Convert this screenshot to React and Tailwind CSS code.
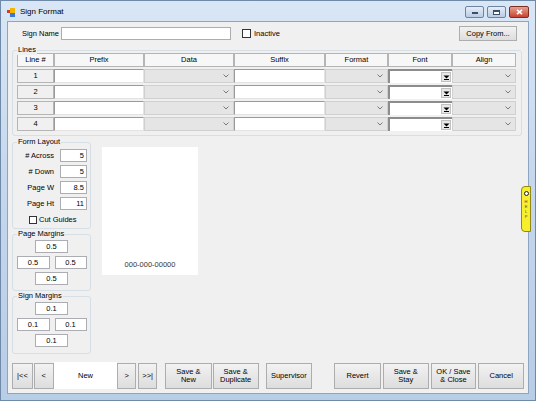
import React from 'react';

const cols = [37, 90, 90, 91, 63, 64, 64];
const heads = ['Line #', 'Prefix', 'Data', 'Suffix', 'Format', 'Font', 'Align'];

const Chevron = () => (
  <svg width="6" height="4" viewBox="0 0 6 4" className="mr-[4px]">
    <path d="M0.5 0.5 L3 3 L5.5 0.5" fill="none" stroke="#6d6d6d" strokeWidth="0.9" />
  </svg>
);

const TextBox = ({ w, value = '', align = 'left', className = '' }) => (
  <div
    className={`h-[13px] bg-white border border-[#abadb3] flex items-center px-[2px] leading-none ${align === 'right' ? 'justify-end' : align === 'center' ? 'justify-center' : ''} ${className}`}
    style={{ width: w }}
  >
    {value}
  </div>
);

const Group = ({ title, className = '', children }) => (
  <div className={`relative border border-[#d5dfe5] rounded-[3px] ${className}`}>
    <span className="absolute top-[-6px] left-[4px] bg-[#f0f0f0] px-[1px] leading-[10px]">{title}</span>
    {children}
  </div>
);

const Btn = ({ w, children, className = '' }) => (
  <div
    className={`h-[26px] bg-gradient-to-b from-[#f2f2f2] to-[#dddddd] border border-[#adadad] flex items-center justify-center text-center leading-[8px] ${className}`}
    style={{ width: w }}
  >
    {children}
  </div>
);

function LineRow({ n }) {
  return (
    <div className="flex h-[14px]">
      <div className="h-full bg-[#f0f0f0] border border-[#b5b5b5] flex items-center justify-center" style={{ width: cols[0] }}>{n}</div>
      <div className="h-full bg-white border-t border-l border-[#9a9a9a] border-b border-r border-b-[#e3e3e3] border-r-[#e3e3e3]" style={{ width: cols[1] }} />
      <div className="h-full bg-[#e5e5e5] border border-[#d0d0d0] flex items-center justify-end" style={{ width: cols[2] }}><Chevron /></div>
      <div className="h-full bg-white border-t border-l border-[#9a9a9a] border-b border-r border-b-[#e3e3e3] border-r-[#e3e3e3]" style={{ width: cols[3] }} />
      <div className="h-full bg-[#e5e5e5] border border-[#d0d0d0] flex items-center justify-end" style={{ width: cols[4] }}><Chevron /></div>
      <div className="h-full bg-white border-t-2 border-l-2 border-[#8c8c8c] flex items-center justify-end pr-[1px]" style={{ width: cols[5] }}>
        <div className="w-[10px] h-[10px] bg-[#e8e8e8] border border-[#c0c0c0] flex items-center justify-center">
          <svg width="7" height="6" viewBox="0 0 7 6">
            <path d="M0.5 1.5 L6.5 1.5 L3.5 4.5 Z" fill="#000" />
            <rect x="1" y="5" width="5" height="1" fill="#000" />
          </svg>
        </div>
      </div>
      <div className="h-full bg-[#e5e5e5] border border-[#d0d0d0] flex items-center justify-end" style={{ width: cols[6] }}><Chevron /></div>
    </div>
  );
}

function LayoutField({ label, value }) {
  return (
    <div className="flex items-center h-[13px]">
      <div className="w-[47px] text-right pr-[6px]">{label}</div>
      <TextBox w={27} value={value} align="right" />
    </div>
  );
}

function Margins({ v }) {
  return (
    <div className="flex flex-col items-center pt-[5px] gap-[3px]">
      <TextBox w={33} value={v} align="center" />
      <div className="flex gap-[5px]">
        <TextBox w={33} value={v} align="center" />
        <TextBox w={32} value={v} align="center" />
      </div>
      <TextBox w={33} value={v} align="center" />
    </div>
  );
}

export default function App() {
  return (
    <div className="w-[536px] h-[401px] bg-gradient-to-b from-[#d9e6f5] via-[#c4d6ec] to-[#b8cde6] border border-[#6f8aa8] flex flex-col font-['Liberation_Sans',Arial,sans-serif] text-[7.5px] text-black overflow-hidden">
      {/* title bar */}
      <div className="h-[20px] flex items-center pl-[6px] pr-[6px] shrink-0">
        <svg width="8" height="9" viewBox="0 0 8 9" className="mr-[5px] mt-[2px]">
          <rect x="0" y="2" width="3" height="3" fill="#d8382a" />
          <rect x="3" y="0" width="5" height="5" fill="#f4b400" />
          <rect x="3" y="5" width="5" height="4" fill="#3b78d8" />
        </svg>
        <span className="text-[8px] mt-[2px]">Sign Format</span>
        <div className="ml-auto flex items-center gap-[3px] mt-[2px]">
          <div className="w-[19px] h-[12px] rounded-[2px] border border-[#6d84a3] bg-gradient-to-b from-[#e6eef8] to-[#b9cbe2] flex items-end justify-center pb-[3px]">
            <div className="w-[6px] h-[2px] bg-white border border-[#3b4f6b]" />
          </div>
          <div className="w-[19px] h-[12px] rounded-[2px] border border-[#6d84a3] bg-gradient-to-b from-[#e6eef8] to-[#b9cbe2] flex items-center justify-center">
            <div className="w-[7px] h-[5px] border border-[#3b4f6b] border-t-2 bg-white" />
          </div>
          <div className="w-[20px] h-[12px] rounded-[2px] border border-[#7a2e25] bg-gradient-to-b from-[#e8a090] to-[#c4432f] flex items-center justify-center">
            <svg width="7" height="6" viewBox="0 0 7 6">
              <path d="M1 0.8 L6 5.2 M6 0.8 L1 5.2" stroke="#fff" strokeWidth="1.6" />
            </svg>
          </div>
        </div>
      </div>

      {/* client */}
      <div className="relative mx-[6px] mb-[6px] flex-1 bg-[#f0f0f0] border border-[#8ea5c2] flex flex-col px-[4px]">
        {/* sign name row */}
        <div className="flex items-center mt-[4px] h-[15px]">
          <div className="w-[49px] text-right pr-[2px]">Sign Name</div>
          <TextBox w={170} />
          <div className="w-[9px] h-[9px] bg-white border border-[#333] ml-[11px]" />
          <span className="ml-[3px]">Inactive</span>
          <Btn w={58} className="ml-auto mr-[7px] !h-[15px]">Copy From...</Btn>
        </div>

        {/* lines group */}
        <Group title="Lines" className="mt-[9px] h-[86px] mr-[2px] px-[4px] pt-[2px]">
          <div className="flex h-[14px]">
            {heads.map((h, i) => (
              <div key={h} className="h-full bg-[#f7f7f7] border border-[#b5b5b5] flex items-center justify-center" style={{ width: cols[i] }}>{h}</div>
            ))}
          </div>
          <div className="flex flex-col gap-[2px] mt-[2px]">
            {[1, 2, 3, 4].map(n => <LineRow key={n} n={n} />)}
          </div>
        </Group>

        {/* middle */}
        <div className="flex mt-[6px]">
          <div className="flex flex-col w-[79px]">
            <Group title="Form Layout" className="h-[87px] pt-[6px]">
              <div className="flex flex-col gap-[3px]">
                <LayoutField label="# Across" value="5" />
                <LayoutField label="# Down" value="5" />
                <LayoutField label="Page W" value="8.5" />
                <LayoutField label="Page Ht" value="11" />
              </div>
              <div className="flex items-center mt-[4px] pl-[16px]">
                <div className="w-[8px] h-[8px] bg-white border border-[#333]" />
                <span className="ml-[2px]">Cut Guides</span>
              </div>
            </Group>
            <Group title="Page Margins" className="mt-[5px] h-[57px]">
              <Margins v="0.5" />
            </Group>
            <Group title="Sign Margins" className="mt-[5px] h-[58px]">
              <Margins v="0.1" />
            </Group>
          </div>
          <div className="ml-[11px] mt-[5px] w-[96px] h-[128px] bg-white flex flex-col justify-end items-center pb-[5px]">
            <span className="text-[#333]">000-000-00000</span>
          </div>
        </div>

        {/* bottom bar */}
        <div className="flex items-center mt-auto mb-[4px]">
          <Btn w={21}>|&lt;&lt;</Btn>
          <Btn w={20} className="ml-[1px]">&lt;</Btn>
          <div className="w-[64px] h-[27px] bg-white flex items-center justify-center">New</div>
          <Btn w={19}>&gt;</Btn>
          <Btn w={19} className="ml-[2px]">&gt;&gt;|</Btn>
          <Btn w={47} className="ml-[8px]">Save &amp;<br />New</Btn>
          <Btn w={46} className="ml-[1px]">Save &amp;<br />Duplicate</Btn>
          <Btn w={47} className="ml-[7px]">Supervisor</Btn>
          <Btn w={47} className="ml-[22px]">Revert</Btn>
          <Btn w={46} className="ml-[2px]">Save &amp;<br />Stay</Btn>
          <Btn w={46} className="ml-[2px]">OK / Save<br />&amp; Close</Btn>
          <Btn w={46} className="ml-[2px]">Cancel</Btn>
        </div>

        {/* help tab */}
        <div className="absolute right-[-3px] top-[164px] w-[10px] h-[46px] bg-[#f7ee2c] border border-[#8f8a1a] rounded-l-[4px] flex flex-col items-center pt-[4px]">
          <div className="w-[5px] h-[5px] rounded-full border-[1.5px] border-[#222] bg-white" />
          <div className="mt-[3px] flex flex-col items-center text-[4px] leading-[5px] text-[#444]">
            <span>H</span><span>E</span><span>L</span><span>P</span>
          </div>
        </div>
      </div>
    </div>
  );
}
